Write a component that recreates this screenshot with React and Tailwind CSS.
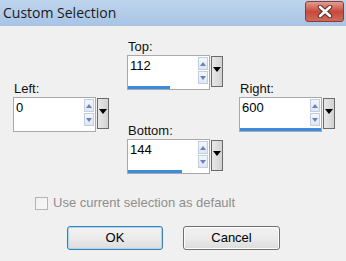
import React from "react";

function SpinField({ label, value, bar }) {
  return (
    <div className="flex flex-col">
      <div className="h-[14px] pl-[1px] text-[13px] leading-[12px] text-[#111]" style={{ fontFamily: '"Liberation Sans", Arial, sans-serif' }}>{label}</div>
      <div className="flex items-start gap-[1px]">
        <div className="relative h-[35px] w-[83px] border border-[#a9a9a9] bg-white">
          <div className="pl-[2px] pt-[2px] text-[13px] leading-[16px] text-black" style={{ fontFamily: '"Liberation Sans", Arial, sans-serif' }}>{value}</div>
          <div className="absolute right-[1px] top-[1px] flex flex-col gap-[1px]">
            <div className="flex h-[13px] w-[10px] items-center justify-center border border-[#c3cde0] bg-gradient-to-b from-[#f3f7fd] to-[#dfe7f5]">
              <svg width="6" height="4" viewBox="0 0 6 4"><path d="M0 4 L3 0 L6 4 Z" fill="#6c82b2" /></svg>
            </div>
            <div className="flex h-[13px] w-[10px] items-center justify-center border border-[#c3cde0] bg-gradient-to-b from-[#f3f7fd] to-[#dfe7f5]">
              <svg width="6" height="4" viewBox="0 0 6 4"><path d="M0 0 L6 0 L3 4 Z" fill="#6c82b2" /></svg>
            </div>
          </div>
          {bar > 0 && (
            <div className="absolute bottom-0 left-0 h-[3px] bg-[#3a8ce0]" style={{ width: bar + "px" }} />
          )}
        </div>
        <div className="mt-[1px] flex h-[31px] w-[12px] items-start justify-center border border-[#6a6a6a] bg-gradient-to-r from-[#e8e8e8] to-[#d2d2d2] pt-[10px]">
          <svg width="8" height="5" viewBox="0 0 8 5"><path d="M0 0 L8 0 L4 5 Z" fill="#000" /></svg>
        </div>
      </div>
    </div>
  );
}

export default function App() {
  return (
    <div className="h-[261px] w-[346px] overflow-hidden bg-[#f0f0f0]" style={{ fontFamily: '"Liberation Sans", Arial, sans-serif' }}>
      <div className="flex h-[26px] items-center justify-between bg-gradient-to-b from-[#bdd4ec] to-[#a8c4e5] pl-[3px] pr-[2px]">
        <span className="text-[14px] leading-[18px] text-[#1a1a1a]" style={{ fontFamily: '"Open Sans", "Noto Sans", sans-serif' }}>Custom Selection</span>
        <div className="mb-[3px] flex h-[21px] w-[39px] items-center justify-center rounded-[3px] border border-[#8a3b36] bg-gradient-to-b from-[#e39c90] via-[#c84a3a] to-[#d06a5a]">
          <svg width="16" height="13" viewBox="0 0 16 13">
            <path d="M3 2 L13 11 M13 2 L3 11" stroke="#5a2a26" strokeWidth="4.5" strokeLinecap="round" />
            <path d="M3 2 L13 11 M13 2 L3 11" stroke="#ffffff" strokeWidth="2.6" strokeLinecap="round" />
          </svg>
        </div>
      </div>

      <div className="flex items-center pl-[13px] pt-[15px]">
        <SpinField label="Left:" value="0" bar={0} />
        <div className="ml-[18px] flex flex-col gap-[35px]">
          <SpinField label="Top:" value="112" bar={42} />
          <SpinField label="Bottom:" value="144" bar={54} />
        </div>
        <div className="ml-[16px]">
          <SpinField label="Right:" value="600" bar={81} />
        </div>
      </div>

      <div className="mt-[22px] flex items-center pl-[35px]">
        <div className="h-[13px] w-[13px] border border-[#b5b5b5] bg-gradient-to-br from-[#f0f0f0] to-[#f8f8f8]" />
        <span className="ml-[5px] text-[13px] leading-[14px] text-[#8e8e8e]">Use current selection as default</span>
      </div>

      <div className="mt-[16px] flex pl-[67px]">
        <div className="flex h-[24px] w-[96px] items-center justify-center rounded-[3px] border border-[#3c7fb1] bg-gradient-to-b from-[#f2f2f2] via-[#ebebeb] to-[#dcdcdc] text-[13px] text-black shadow-[inset_0_0_0_1px_#a6d8f5]">OK</div>
        <div className="ml-[20px] flex h-[24px] w-[97px] items-center justify-center rounded-[3px] border border-[#707070] bg-gradient-to-b from-[#f2f2f2] via-[#ebebeb] to-[#dcdcdc] text-[13px] text-black shadow-[inset_0_0_0_1px_#fcfcfc]">Cancel</div>
      </div>
    </div>
  );
}
